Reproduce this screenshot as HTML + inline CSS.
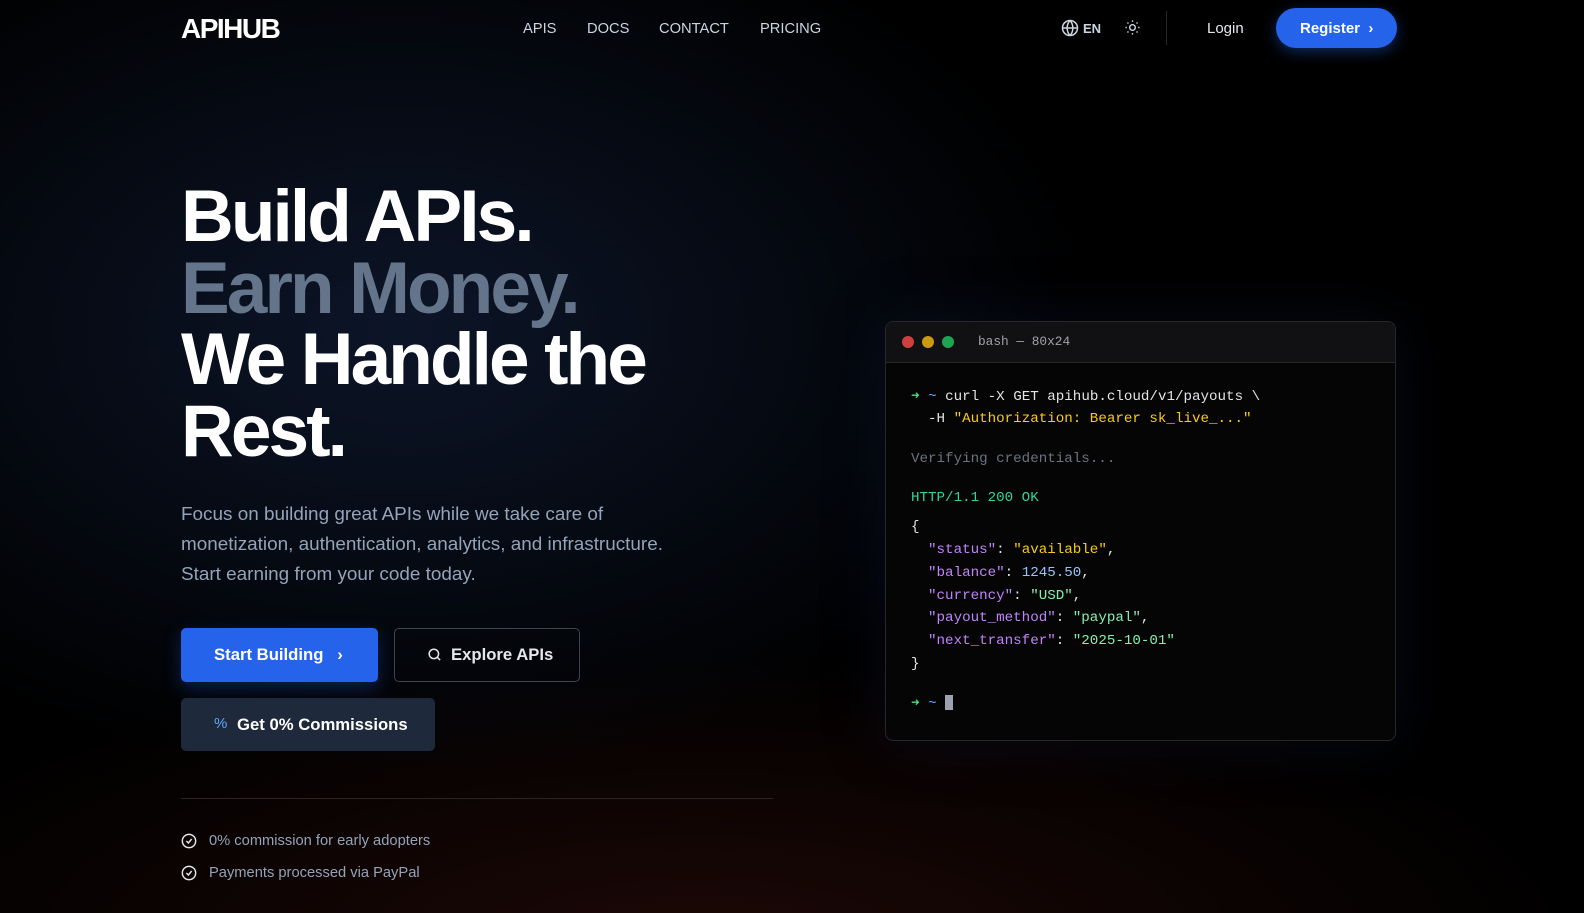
<!DOCTYPE html>
<html style="overflow:hidden"><head><style>
*{margin:0;padding:0;box-sizing:border-box}
body{width:1584px;height:913px;overflow:hidden;font-family:"Liberation Sans",sans-serif;color:#fff;
background:radial-gradient(ellipse 700px 450px at 400px 330px,#0c1528 0%,rgba(0,0,0,0) 100%),radial-gradient(ellipse 900px 300px at 700px 950px,#1c0806 0%,rgba(0,0,0,0) 100%),#000;position:relative}
.abs{position:absolute}
.nav a{position:absolute;top:21px;font-size:14.7px;color:#cbd5e1;}
h1{position:absolute;left:181px;top:181px;font-size:73px;line-height:71.5px;font-weight:700;letter-spacing:-2.9px}
.mono{font-family:"Liberation Mono",monospace;font-size:14.2px}
.t{position:absolute;left:25px;white-space:pre}
</style></head><body>
<div class="abs" style="left:181px;top:13px;font-size:28px;font-weight:700;letter-spacing:-1.5px">APIHUB</div>
<div class="nav"><a style="left:523px">APIS</a><a style="left:587px">DOCS</a><a style="left:659px">CONTACT</a><a style="left:760px">PRICING</a></div>
<svg class="abs" style="left:1061px;top:19px" width="18" height="18" viewBox="0 0 24 24" fill="none" stroke="#cbd5e1" stroke-width="2"><circle cx="12" cy="12" r="10"/><path d="M2 12h20M12 2a15 15 0 0 1 0 20M12 2a15 15 0 0 0 0 20"/></svg>
<div class="abs" style="left:1083px;top:21px;font-size:13px;font-weight:700;color:#cbd5e1">EN</div>
<svg class="abs" style="left:1124px;top:19px" width="17" height="17" viewBox="0 0 24 24" fill="none" stroke="#cbd5e1" stroke-width="2"><circle cx="12" cy="12" r="4"/><path d="M12 2v2M12 20v2M4.9 4.9l1.4 1.4M17.7 17.7l1.4 1.4M2 12h2M20 12h2M4.9 19.1l1.4-1.4M17.7 6.3l1.4-1.4"/></svg>
<div class="abs" style="left:1166px;top:11px;width:1px;height:34px;background:#27272a"></div>
<div class="abs" style="left:1207px;top:20px;font-size:15px;color:#e5e7eb">Login</div>
<div class="abs" style="left:1276px;top:8px;width:121px;height:40px;border-radius:20px;background:#2563eb;font-size:15px;font-weight:700;line-height:41px;padding-left:24px;box-shadow:0 4px 14px rgba(37,99,235,.4)">Register &nbsp;›</div>
<h1>Build APIs.<br><span style="color:#64748b">Earn Money.</span><br>We Handle the<br>Rest.</h1>
<div class="abs" style="left:181px;top:500px;font-size:18.9px;line-height:29.8px;color:#94a3b8;width:510px">Focus on building great APIs while we take care of monetization, authentication, analytics, and infrastructure. Start earning from your code today.</div>
<div class="abs" style="left:181px;top:628px;width:197px;height:54px;border-radius:5px;background:#2563eb;font-size:16.7px;font-weight:700;line-height:54px;padding-left:33px;box-shadow:0 6px 18px rgba(37,99,235,.3)">Start Building &nbsp;&nbsp;›</div>
<div class="abs" style="left:394px;top:628px;width:186px;height:54px;border-radius:5px;border:1px solid #3f4451;font-size:16.7px;font-weight:700;line-height:52px;padding-left:56px;color:#e5e7eb">Explore APIs</div>
<svg class="abs" style="left:427px;top:647px" width="15" height="15" viewBox="0 0 24 24" fill="none" stroke="#e5e7eb" stroke-width="2.4"><circle cx="11" cy="11" r="7.5"/><path d="M21 21l-4.5-4.5"/></svg>
<div class="abs" style="left:181px;top:698px;width:254px;height:53px;border-radius:5px;background:#1e293b;font-size:16.7px;font-weight:700;line-height:53px;padding-left:56px">Get 0% Commissions</div>
<div class="abs" style="left:214px;top:715px;font-size:15px;color:#60a5fa">%</div>
<div class="abs" style="left:181px;top:798px;width:592px;height:1px;background:#2a2224"></div>
<svg class="abs" style="left:181px;top:833px" width="16" height="16" viewBox="0 0 24 24" fill="none" stroke="#e5e7eb" stroke-width="2.2"><circle cx="12" cy="12" r="10"/><path d="M8 12l3 3 5-6"/></svg>
<div class="abs" style="left:209px;top:833px;font-size:14.7px;color:#94a3b8">0% commission for early adopters</div>
<svg class="abs" style="left:181px;top:865px" width="16" height="16" viewBox="0 0 24 24" fill="none" stroke="#e5e7eb" stroke-width="2.2"><circle cx="12" cy="12" r="10"/><path d="M8 12l3 3 5-6"/></svg>
<div class="abs" style="left:209px;top:865px;font-size:14.7px;color:#94a3b8">Payments processed via PayPal</div>

<div class="abs mono" style="left:885px;top:321px;width:511px;height:420px;border:1px solid #27272a;border-radius:8px;background:#050505;overflow:hidden;box-shadow:0 0 60px rgba(20,30,60,.35)">
 <div style="height:41px;background:#111113;border-bottom:1px solid #27272a;position:relative">
  <span class="abs" style="left:16px;top:14px;width:12px;height:12px;border-radius:6px;background:#d03f3f"></span>
  <span class="abs" style="left:36px;top:14px;width:12px;height:12px;border-radius:6px;background:#cc9a10"></span>
  <span class="abs" style="left:56px;top:14px;width:12px;height:12px;border-radius:6px;background:#1fa552"></span>
  <span class="abs" style="left:92px;top:12px;font-size:12.8px;color:#a1a1aa">bash — 80x24</span>
 </div>
 <div class="t" style="top:66px;color:#e4e4e7"><span style="color:#4ade80;font-weight:700">➜</span> <span style="color:#60a5fa">~</span> curl -X GET apihub.cloud/v1/payouts \</div>
 <div class="t" style="top:89px;color:#e4e4e7">  -H <span style="color:#facc15">"Authorization: Bearer sk_live_..."</span></div>
 <div class="t" style="top:129px;color:#6b7280">Verifying credentials...</div>
 <div class="t" style="top:168px;color:#34d399">HTTP/1.1 200 OK</div>
 <div class="t" style="top:197px;color:#e4e4e7">{</div>
 <div class="t" style="top:220px;color:#e4e4e7">  <span style="color:#c084fc">"status"</span>: <span style="color:#facc15">"available"</span>,</div>
 <div class="t" style="top:243px;color:#e4e4e7">  <span style="color:#c084fc">"balance"</span>: <span style="color:#93c5fd">1245.50</span>,</div>
 <div class="t" style="top:266px;color:#e4e4e7">  <span style="color:#c084fc">"currency"</span>: <span style="color:#86efac">"USD"</span>,</div>
 <div class="t" style="top:288px;color:#e4e4e7">  <span style="color:#c084fc">"payout_method"</span>: <span style="color:#86efac">"paypal"</span>,</div>
 <div class="t" style="top:311px;color:#e4e4e7">  <span style="color:#c084fc">"next_transfer"</span>: <span style="color:#86efac">"2025-10-01"</span></div>
 <div class="t" style="top:334px;color:#e4e4e7">}</div>
 <div class="t" style="top:373px;color:#e4e4e7"><span style="color:#4ade80;font-weight:700">➜</span> <span style="color:#60a5fa">~</span> <span style="display:inline-block;width:8px;height:15px;background:#9ca3af;vertical-align:-3px"></span></div>
</div>
</body></html>
